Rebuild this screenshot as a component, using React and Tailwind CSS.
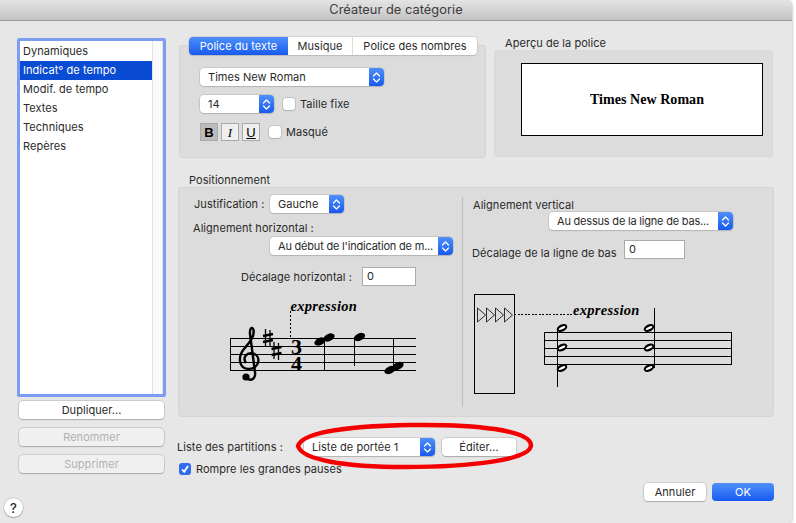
import React from 'react'

const FONT = { fontFamily: 'Inter, "Liberation Sans", sans-serif' }

function Stepper() {
  return (
    <span className="flex h-full w-[15px] shrink-0 items-center justify-center rounded-r-[4px] bg-gradient-to-b from-[#4f8ffb] to-[#1759ee]">
      <svg width="9" height="13" viewBox="0 0 9 13" fill="none" stroke="white" strokeWidth="1.3" strokeLinecap="round" strokeLinejoin="round">
        <path d="M1.5 5 L4.5 2 L7.5 5" />
        <path d="M1.5 8 L4.5 11 L7.5 8" />
      </svg>
    </span>
  )
}

function Select({ label, className = '' }) {
  return (
    <div className={`flex h-[18px] items-center rounded-[4px] bg-white shadow-[0_0_0_0.5px_#b4b4b4,0_1px_1px_#b4b4b4] ${className}`}>
      <span className="min-w-0 flex-1 whitespace-nowrap pl-[8px] leading-[18px]">{label}</span>
      <Stepper />
    </div>
  )
}

function Checkbox({ className = '', checked = false }) {
  return (
    <span className={`flex h-[12px] w-[12px] shrink-0 items-center justify-center rounded-[3px] ${checked ? 'bg-[#2f6cf1]' : 'bg-white shadow-[0_0_0_0.5px_#a8a8a8,0_1px_1px_#bbbbbb]'} ${className}`}>
      {checked && (
        <svg width="10" height="10" viewBox="0 0 10 10" fill="none" stroke="white" strokeWidth="1.8">
          <path d="M2 5.5 L4.2 7.8 L8 2" />
        </svg>
      )}
    </span>
  )
}

function Button({ label, className = '', disabled = false }) {
  return (
    <div className={`flex h-[18px] items-center justify-center rounded-[4px] shadow-[0_0_0_0.5px_#b0b0b0,0_1px_1px_#aaaaaa] ${disabled ? 'bg-[#f0f0f0] text-[#b0b0b0]' : 'bg-white text-[#2a2a2a]'} ${className}`}>
      {label}
    </div>
  )
}

function StyleButton({ children, className = '', active = false }) {
  return (
    <span className={`flex h-[18px] w-[18px] items-center justify-center border border-[#a9a9a9] text-[13px] leading-none text-black ${active ? 'bg-[#bcbcbc]' : 'bg-[#efefef]'} ${className}`} style={{ fontFamily: '"Liberation Sans", sans-serif' }}>
      {children}
    </span>
  )
}

function NumberInput({ className = '' }) {
  return (
    <div className={`h-[19px] border border-[#ababab] bg-white pl-[4px] leading-[16px] ${className}`}>0</div>
  )
}

function TreblePath() {
  return (
    <g fill="none" stroke="black">
      <path strokeWidth="2.4" d="M36 88 C42 92 46 88 45 82 L40 44 C39.5 38 42 36 43.5 40 C45 47 38 54 34 59 C28 66 28 79 39 79 C49 79 52 66 43 63.5 C37 62 32 67 36 73" />
      <circle cx="36" cy="87" r="3.6" fill="black" stroke="none" />
    </g>
  )
}

function Sharp({ x, y }) {
  return (
    <g stroke="black">
      <path strokeWidth="1.3" d={`M${x - 2.5} ${y - 9} V${y + 8} M${x + 2} ${y - 8} V${y + 9}`} />
      <path strokeWidth="2.6" d={`M${x - 5} ${y - 2} L${x + 5} ${y - 4} M${x - 5} ${y + 4} L${x + 5} ${y + 2}`} />
    </g>
  )
}

function Head({ x, y }) {
  return <ellipse cx={x} cy={y} rx="6" ry="3.6" fill="black" transform={`rotate(-25 ${x} ${y})`} />
}

function LeftStaff() {
  return (
    <svg width="220" height="100" viewBox="0 0 220 100" className="block" shapeRendering="crispEdges">
      <g stroke="black" strokeWidth="1">
        {[48.5, 56.5, 64.5, 72.5, 80.5].map((y) => <path key={y} d={`M20 ${y} H206`} />)}
        <path d="M20.5 48 V81 M114.5 48 V81 M183.5 48 V81" />
        <path d="M80.5 21 V47" strokeDasharray="2 2" />
        <path d="M144.5 47 V76" />
      </g>
      <g shapeRendering="auto">
        <TreblePath />
        <Sharp x={58} y={48} />
        <Sharp x={66.5} y={61} />
        <text x="81" y="64" fontSize="22" fontWeight="700" fontFamily="Liberation Serif, serif">3</text>
        <text x="81" y="80.5" fontSize="22" fontWeight="700" fontFamily="Liberation Serif, serif">4</text>
        <Head x={110} y={51.5} />
        <Head x={119} y={47.5} />
        <Head x={149.5} y={47} />
        <Head x={180} y={80} />
        <Head x={188} y={76} />
        <text x="80.5" y="20.5" fontSize="14.5" fontWeight="700" fontStyle="italic" fontFamily="Liberation Serif, serif" letterSpacing="0.3">expression</text>
      </g>
    </svg>
  )
}

function OpenHead({ x, y }) {
  return (
    <g transform={`rotate(-25 ${x} ${y})`}>
      <ellipse cx={x} cy={y} rx="5.6" ry="3.5" fill="black" />
      <ellipse cx={x} cy={y} rx="3.6" ry="1.2" fill="white" />
    </g>
  )
}

function RightStaff() {
  return (
    <svg width="300" height="110" viewBox="0 100 300 110" className="block">
      <g fill="none" stroke="black" strokeWidth="1" shapeRendering="crispEdges">
        <rect x="14.5" y="104.5" width="40" height="99" />
        {[142.5, 150.5, 158.5, 166.5, 174.5].map((y) => <path key={y} d={`M84.5 ${y} H271.5`} />)}
        <path d="M84.5 142 V175 M271.5 142 V175" />
        <path d="M54 124.5 H112" strokeDasharray="2 1.5" />
      </g>
      <g fill="none" stroke="black" strokeWidth="0.8">
        {[17.5, 26.5, 35.5, 44.5].map((x) => <path key={x} d={`M${x} 118 L${x + 8} 125 L${x} 132 Z`} />)}
      </g>
      <OpenHead x={102} y={138} />
      <OpenHead x={102} y={157.5} />
      <OpenHead x={102} y={178} />
      <OpenHead x={189} y={138} />
      <OpenHead x={189} y={157.5} />
      <OpenHead x={189} y={178} />
      <path d="M97.5 140 V197 M194.5 118 V178" stroke="black" strokeWidth="1" shapeRendering="crispEdges" />
      <text x="113" y="125" fontSize="14.5" fontWeight="700" fontStyle="italic" fontFamily="Liberation Serif, serif" letterSpacing="0.3">expression</text>
    </svg>
  )
}

const CATEGORIES = ['Dynamiques', 'Indicat° de tempo', 'Modif. de tempo', 'Textes', 'Techniques', 'Repères']

export default function App() {
  return (
    <div className="relative h-[523px] w-[796px] overflow-hidden bg-white text-[11px] leading-[14px] tracking-[0.05px] text-[#2a2a2a]" style={FONT}>
      <div className="flex h-full w-[792px] flex-col rounded-tr-[6px] rounded-br-[4px] bg-[#e7e7e7] shadow-[0_0_3px_#a0a0a0]">
        {/* Title bar */}
        <div className="flex h-[21px] shrink-0 items-center justify-center rounded-tr-[6px] border-b border-[#9c9c9c] bg-gradient-to-b from-[#e4e4e4] to-[#c4c4c4] text-[12.8px] text-[#3c3c3c]">
          Créateur de catégorie
        </div>

        <div className="flex min-h-0 flex-1">
          {/* Category list + buttons */}
          <aside className="ml-[17px] flex w-[149px] shrink-0 flex-col">
            <div className="mt-[17px] flex h-[359px] rounded-[2px] border-[3px] border-[#7d9df2] bg-white">
              <ul className="w-[132px] pt-[1px]">
                {CATEGORIES.map((c, i) => (
                  <li key={c} className={`flex h-[19px] items-center pb-[2px] pl-[3px] ${i === 1 ? 'bg-[#0a4bd3] text-white' : ''}`}>{c}</li>
                ))}
              </ul>
              <div className="flex-1 border-x border-[#e2e2e2] bg-[#fafafa]" />
            </div>
            <div className="mx-[2px] mt-[4px] flex flex-col gap-[9px]">
              <Button label="Dupliquer..." />
              <Button label="Renommer" disabled />
              <Button label="Supprimer" disabled />
            </div>
            <div className="-ml-[13px] mt-[25px] flex h-[19px] w-[19px] items-center justify-center rounded-full bg-white text-[13px] font-medium shadow-[0_0_0_0.5px_#b0b0b0,0_1px_1px_#999999]">?</div>
          </aside>

          <main className="ml-[12px] flex w-[596px] flex-col">
            <div className="ml-[1px] mt-[16px] flex h-[121px]">
              {/* Font panel with tabs */}
              <div className="relative w-[307px] pt-[8px]">
                <div className="h-[113px] rounded-[3px] border border-[#d4d4d4] bg-[#dcdcdc] pl-[20px] pt-[22px]">
                  <Select label="Times New Roman" className="w-[184px]" />
                  <div className="mt-[9px] flex items-center">
                    <Select label="14" className="w-[74px]" />
                    <Checkbox className="ml-[9px]" />
                    <span className="ml-[5px]">Taille fixe</span>
                  </div>
                  <div className="mt-[10px] flex items-center">
                    <StyleButton active><b>B</b></StyleButton>
                    <StyleButton className="ml-[3px]"><i style={{ fontFamily: '"Liberation Serif", serif' }}>I</i></StyleButton>
                    <StyleButton className="ml-[3px]"><u>U</u></StyleButton>
                    <Checkbox className="ml-[9px]" />
                    <span className="ml-[5px]">Masqué</span>
                  </div>
                </div>
                <div className="absolute left-[10px] top-0 flex h-[18px] w-[288px] rounded-[4px] bg-white shadow-[0_0_0_0.5px_#c0c0c0,0_1px_1px_#b4b4b4]">
                  <span className="flex w-[99px] items-center justify-center rounded-l-[4px] bg-gradient-to-b from-[#4f8ffb] to-[#1759ee] text-white">Police du texte</span>
                  <span className="flex w-[65px] items-center justify-center border-r border-[#dcdcdc]">Musique</span>
                  <span className="flex flex-1 items-center justify-center">Police des nombres</span>
                </div>
              </div>

              {/* Preview */}
              <div className="ml-[8px] flex w-[279px] flex-col">
                <div className="ml-[11px] h-[13px] leading-[13px]">Aperçu de la police</div>
                <div className="h-[107px] rounded-[3px] border border-[#d8d8d8] bg-[#dcdcdc] pl-[26px] pt-[12px]">
                  <div className="flex h-[73px] w-[242px] items-center justify-center border border-black bg-white pl-[10px] text-[14px] font-bold text-black" style={{ fontFamily: '"Liberation Serif", serif' }}>
                    Times New Roman
                  </div>
                </div>
              </div>
            </div>

            <div className="ml-[11px] mt-[15px] h-[14px]">Positionnement</div>
            <section className="flex h-[230px] rounded-[3px] border border-[#d4d4d4] bg-[#dcdcdc]">
              {/* Horizontal */}
              <div className="w-[283px] shrink-0 pt-[7px]">
                <div className="ml-[15px] flex items-center">
                  <span className="w-[76px]">Justification :</span>
                  <Select label="Gauche" className="w-[74px]" />
                </div>
                <div className="ml-[14px] mt-[8px] h-[14px]">Alignement horizontal :</div>
                <Select label="Au début de l'indication de m..." className="ml-[91px] mt-[2px] w-[183px] tracking-[-0.2px]" />
                <div className="mt-[12px] flex items-center">
                  <span className="ml-[62px] w-[121px]">Décalage horizontal :</span>
                  <NumberInput className="w-[54px]" />
                </div>
                <div className="ml-[31px] mt-[4px]">
                  <LeftStaff />
                </div>
              </div>
              {/* Vertical */}
              <div className="my-[9px] w-[300px] border-l border-[#bdbdbd] pl-[10px]">
                <div className="mt-[1px] h-[14px] leading-[14px]">Alignement vertical</div>
                <Select label="Au dessus de la ligne de bas..." className="ml-[76px] w-[184px] tracking-[-0.2px]" />
                <div className="mt-[10px] flex items-start">
                  <span className="-ml-[1px] w-[152px] pt-[6px]">Décalage de la ligne de bas</span>
                  <NumberInput className="w-[61px]" />
                </div>
                <div className="-ml-[13px] mt-[30px]">
                  <RightStaff />
                </div>
              </div>
            </section>

            <div className="-ml-[1px] mt-[21px] flex items-center">
              <span className="w-[127px]">Liste des partitions :</span>
              <Select label="Liste de portée 1" className="w-[131px]" />
              <Button label="Éditer..." className="ml-[7px] w-[74px]" />
            </div>
            <div className="ml-[1px] mt-[6px] flex items-center">
              <Checkbox checked />
              <span className="ml-[5px]">Rompre les grandes pauses</span>
            </div>
            <div className="mt-[7px] flex justify-end gap-[6px]">
              <Button label="Annuler" className="w-[62px]" />
              <div className="flex h-[18px] w-[62px] items-center justify-center rounded-[4px] bg-gradient-to-b from-[#4f8ffb] to-[#1759ee] text-white">OK</div>
            </div>
          </main>
        </div>
      </div>

      {/* Red annotation drawn on top of the screenshot */}
      <svg className="absolute left-[290px] top-[418px]" width="250" height="58" viewBox="0 0 250 58" fill="none">
        <path d="M8 28 C12 14 60 8 120 7 C185 6 240 12 241 27 C241 42 180 49 115 49 C55 49 12 42 8 28 Z" stroke="#f40000" strokeWidth="4.5" />
      </svg>
    </div>
  )
}
